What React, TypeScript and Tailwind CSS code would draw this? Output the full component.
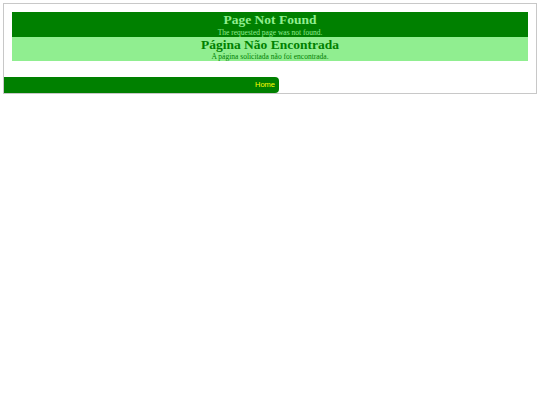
import React from 'react';

const serif = { fontFamily: '"Liberation Serif", "Times New Roman", serif' };

export default function App() {
  return (
    <div className="min-h-[405px] w-[540px] bg-white">
      <div className="m-[3px] border border-[#c8c8c8]">
        {/* Header bands */}
        <div className="px-2 pt-2 pb-4 text-center" style={serif}>
          <div className="bg-[#008000] text-[#90ee90]">
            <h1 className="text-[13.5px] font-bold leading-[15.5px]">Page Not Found</h1>
            <p className="text-[7.5px] leading-[9px]">The requested page was not found.</p>
          </div>
          <div className="bg-[#90ee90] text-[#008000]">
            <h1 className="text-[13.5px] font-bold leading-[15.5px]">Página Não Encontrada</h1>
            <p className="text-[7.5px] leading-[9px]">A página solicitada não foi encontrada.</p>
          </div>
        </div>

        {/* Footer nav */}
        <div className="flex h-[16px] w-[275px] items-center justify-end rounded-r-[4px] bg-[#008000] pr-[4px]">
          <a
            href="#"
            className="text-[7.5px] leading-none text-[#ffff00]"
            style={{ fontFamily: '"Liberation Sans", Arial, sans-serif' }}
          >
            Home
          </a>
        </div>
      </div>
    </div>
  );
}
